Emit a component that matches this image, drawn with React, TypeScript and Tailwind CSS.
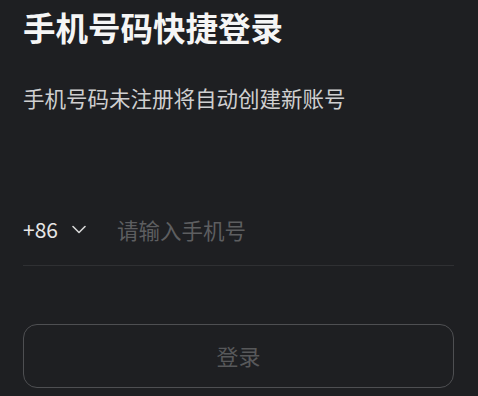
export default function App() {
  return (
    <div
      className="min-h-[396px] w-full bg-[#1e1f22] px-[23px] pt-[11px] pr-[24px]"
      style={{ fontFamily: '"Noto Sans CJK SC", "Noto Sans", sans-serif' }}
    >
      {/* 标题 */}
      <h1 className="text-[32.5px] font-bold leading-none text-[#f5f5f5]">手机号码快捷登录</h1>
      <p className="mt-[43px] text-[21.5px] leading-none text-[#cfcfd0]">手机号码未注册将自动创建新账号</p>

      {/* 手机号输入 */}
      <div className="mt-[89px] flex h-[69px] items-center border-b border-[#2f3033] pb-[3px]">
        <button className="flex items-center text-[21px] leading-none text-[#e6e6e6]">
          +86
          <svg className="ml-[14px]" width="14" height="9" viewBox="0 0 14 9" fill="none">
            <path d="M1 1.5 L7 7.5 L13 1.5" stroke="#d6d6d6" strokeWidth="1.6" strokeLinecap="round" strokeLinejoin="round" />
          </svg>
        </button>
        <input
          className="ml-[31px] flex-1 bg-transparent text-[21.5px] leading-none text-[#e6e6e6] outline-none placeholder:text-[#5d5e60]"
          placeholder="请输入手机号"
        />
      </div>

      {/* 登录按钮 */}
      <button className="mt-[58px] h-[64px] w-full rounded-[14px] border-[1.5px] border-[#4e4f52] pb-[3px] text-[22px] leading-none text-[#57585a]">
        登录
      </button>
    </div>
  );
}
